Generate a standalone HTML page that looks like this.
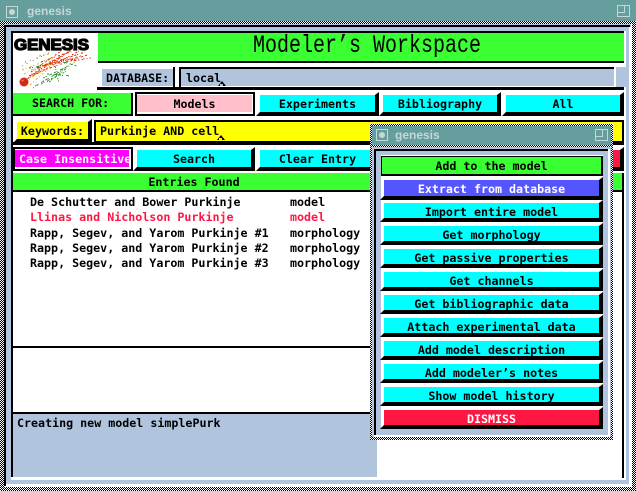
<!DOCTYPE html>
<html><head><meta charset="utf-8"><title>genesis</title>
<style>
html,body{margin:0;padding:0;background:#fff}
#p{position:relative;width:636px;height:491px;overflow:hidden;background:#fff;font:bold 11.67px/1 "DejaVu Sans Mono","Liberation Mono",monospace;color:#000}
#p div{position:absolute;box-sizing:border-box}
.ck{background:repeating-conic-gradient(#000 0 25%,#fff 0 50%) 0 0/2px 2px}
.lb{background:#b0c4de}.k{background:#000}.w{background:#fff}.t{background:#669e9e}
.btn{text-align:center;white-space:pre}
.btn::after{content:"";position:absolute;left:-4px;top:-3px;right:-4px;bottom:-4px;background:#000;clip-path:polygon(100% 0,100% 100%,0 100%,4px calc(100% - 4px),calc(100% - 4px) calc(100% - 4px),calc(100% - 4px) 3px)}
.btn::before{content:"";position:absolute;left:-2px;top:-2px;width:calc(100% + 2px);height:2px;background:#fff}
.c{background:#0ff}
.row{white-space:pre;line-height:15px;height:15px}
.gt{font:bold 12px/14px "Liberation Sans",sans-serif;color:#c4d8d8;white-space:pre}
</style></head><body>
<div id="p">
<div class="ck" style="left:0;top:0;width:636px;height:491px"></div>
<div class="t" style="left:0;top:0;width:636px;height:21px"></div>
<div style="left:6px;top:6px;width:12px;height:12px;border:1px solid #c4d8d8"></div>
<div style="left:9px;top:9px;width:6px;height:6px;border-radius:50%;background:#c4d8d8"></div>
<div class="gt" style="left:27px;top:4px">genesis</div>
<div style="left:617px;top:5px;width:13px;height:12px;border:1px solid #c4d8d8"></div>
<div style="left:617px;top:5px;width:8px;height:8px;border:1px solid #c4d8d8"></div>

<div class="lb" style="left:4px;top:24px;width:628px;height:463px"></div>
<div class="w" style="left:631px;top:24px;width:1px;height:463px"></div>
<div class="w" style="left:4px;top:486px;width:628px;height:1px"></div>
<div class="k" style="left:4px;top:25px;width:626px;height:2px"></div>
<div class="k" style="left:4px;top:25px;width:2px;height:461px"></div>
<div class="w" style="left:6px;top:484px;width:625px;height:2px"></div>
<div class="w" style="left:629px;top:27px;width:2px;height:459px"></div>
<div class="k" style="left:11px;top:31px;width:613px;height:447px"></div>
<div class="w" style="left:13px;top:33px;width:611px;height:447px"></div>
<div class="w" style="left:624px;top:31px;width:2px;height:36px"></div>
<div class="w" style="left:624px;top:87px;width:2px;height:393px"></div>
<div class="w" style="left:11px;top:477px;width:615px;height:3px"></div>

<!-- logo -->
<svg style="position:absolute;left:13px;top:32px" width="84" height="58" viewBox="0 0 84 58" shape-rendering="crispEdges">
<g fill="none" stroke-width="1">
<path stroke="#d8341a" stroke-dasharray="2 1 1 3 2 2" d="M14 47L66 19M16 44L60 17M20 42L74 23M24 36L68 24M28 30L56 20M18 40L48 19M30 34L72 20M36 30L62 27"/>
<path stroke="#e24a18" stroke-dasharray="1 2 3 2" d="M15 46L50 24M22 38L64 16M26 34L78 26"/>
<path stroke="#e0b41e" stroke-dasharray="2 2 1 3" d="M11 42L40 26M13 50L36 32M17 53L34 38M9 38L30 30M18 44L38 36M26 24L36 22"/>
<path stroke="#2f9a36" stroke-dasharray="2 1 1 3 3 2" d="M22 54L50 38M28 52L56 38M30 46L60 32M34 42L58 44M36 50L54 36M42 34L46 52M16 36L28 34M50 30L64 34"/>
<path stroke="#7a8f2c" stroke-dasharray="1 4 1 6" d="M9 34L50 14M20 56L68 26M34 50L62 28M12 30L30 24"/>
</g>
<text x="1" y="18" font-family="Liberation Sans" font-weight="bold" font-size="16" textLength="75" lengthAdjust="spacingAndGlyphs" stroke="#000" stroke-width="1.3" shape-rendering="auto">GENESIS</text>
<circle cx="11" cy="50" r="4.5" fill="#d42a14" shape-rendering="auto"/><circle cx="9.5" cy="48.5" r="1" fill="#f08060" shape-rendering="auto"/>
</svg>

<!-- title -->
<div class="k" style="left:98px;top:33px;width:526px;height:30px"></div>
<div style="left:98px;top:33px;width:526px;height:28px;background:#39ff33"></div>
<div style="left:110px;top:33px;width:514px;height:28px;text-align:center;font:normal 20px/28px 'Liberation Mono',monospace;transform:scaleY(1.25)">Modeler’s Workspace</div>

<!-- database -->
<div class="lb" style="left:616px;top:67px;width:13px;height:20px"></div>
<div class="k" style="left:97px;top:87px;width:527px;height:3px"></div>
<div class="k" style="left:173px;top:67px;width:2px;height:21px"></div>
<div class="lb" style="left:102px;top:69px;width:71px;height:17px;line-height:18px;padding-left:4px">DATABASE:</div>
<div class="k" style="left:179px;top:67px;width:437px;height:20px"></div>
<div class="lb" style="left:181px;top:69px;width:433px;height:17px;line-height:18px;padding-left:5px">local</div>
<div class="w" style="left:181px;top:86px;width:435px;height:1px"></div>
<div class="w" style="left:614px;top:67px;width:2px;height:20px"></div>
<div style="left:218px;top:81px;width:0;height:0;border-left:4px solid transparent;border-right:4px solid transparent;border-bottom:5px solid #000"></div>
<div class="lb" style="left:220px;top:84px;width:3px;height:2px"></div>

<!-- search row -->
<div class="k" style="left:13px;top:93px;width:120px;height:23px"></div>
<div style="left:13px;top:93px;width:118px;height:21px;background:#39ff33;line-height:20px;padding-left:19px">SEARCH FOR:</div>
<div class="k" style="left:135px;top:92px;width:120px;height:24px"></div>
<div class="w" style="left:137px;top:94px;width:116px;height:20px"></div>
<div style="left:137px;top:95px;width:115px;height:17px;background:#ffc0cb;line-height:18px;text-align:center">Models</div>
<div class="btn c" style="left:260px;top:95px;width:115px;height:17px;line-height:18px">Experiments</div>
<div class="btn c" style="left:383px;top:95px;width:114px;height:17px;line-height:18px">Bibliography</div>
<div class="btn c" style="left:506px;top:95px;width:114px;height:17px;line-height:18px">All</div>

<!-- keywords -->
<div class="btn" style="left:17px;top:122px;width:71px;height:17px;background:#ff0;line-height:18px">Keywords:</div>
<div class="k" style="left:94px;top:120px;width:530px;height:22px"></div>
<div style="left:96px;top:122px;width:526px;height:19px;background:#ff0;line-height:19px;padding-left:4px">Purkinje AND cell</div>
<div style="left:217px;top:135px;width:0;height:0;border-left:4px solid transparent;border-right:4px solid transparent;border-bottom:5px solid #000"></div>
<div style="left:219px;top:138px;width:3px;height:2px;background:#ff0"></div>
<div class="k" style="left:13px;top:142px;width:611px;height:3px"></div>

<!-- action row -->
<div class="k" style="left:13px;top:147px;width:120px;height:24px"></div>
<div class="w" style="left:15px;top:149px;width:116px;height:20px"></div>
<div style="left:15px;top:150px;width:114px;height:17px;background:#f0f;color:#fff;line-height:18px;padding-left:4px;white-space:pre;overflow:hidden">Case Insensitive</div>
<div class="btn c" style="left:137px;top:150px;width:114px;height:17px;line-height:18px">Search</div>
<div class="btn c" style="left:260px;top:150px;width:115px;height:17px;line-height:18px">Clear Entry</div>
<div class="btn" style="left:560px;top:150px;width:60px;height:17px;background:#ff1744"></div>

<!-- entries -->
<div style="left:13px;top:173px;width:611px;height:17px;background:#39ff33;line-height:18px;text-align:center;padding-right:249px">Entries Found</div>
<div class="k" style="left:13px;top:190px;width:611px;height:2px"></div>
<div class="k" style="left:622px;top:173px;width:2px;height:305px"></div>
<div class="row" style="left:30px;top:195px">De Schutter and Bower Purkinje</div><div class="row" style="left:290px;top:195px">model</div>
<div class="row" style="left:30px;top:210px;color:#ff1744">Llinas and Nicholson Purkinje</div><div class="row" style="left:290px;top:210px;color:#ff1744">model</div>
<div class="row" style="left:30px;top:226px">Rapp, Segev, and Yarom Purkinje #1</div><div class="row" style="left:290px;top:226px">morphology</div>
<div class="row" style="left:30px;top:241px">Rapp, Segev, and Yarom Purkinje #2</div><div class="row" style="left:290px;top:241px">morphology</div>
<div class="row" style="left:30px;top:256px">Rapp, Segev, and Yarom Purkinje #3</div><div class="row" style="left:290px;top:256px">morphology</div>
<div class="k" style="left:12px;top:346px;width:370px;height:2px"></div>

<!-- log -->
<div class="k" style="left:11px;top:412px;width:366px;height:2px"></div>
<div class="lb" style="left:13px;top:414px;width:364px;height:63px;line-height:19px;padding-left:4px">Creating new model simplePurk</div>

<!-- popup -->
<div class="ck" style="left:370px;top:124px;width:243px;height:316px"></div>
<div class="t" style="left:372px;top:126px;width:239px;height:19px"></div>
<div style="left:376px;top:129px;width:12px;height:12px;border:1px solid #c4d8d8"></div>
<div style="left:379px;top:132px;width:6px;height:6px;border-radius:50%;background:#c4d8d8"></div>
<div class="gt" style="left:395px;top:128px">genesis</div>
<div style="left:595px;top:129px;width:13px;height:12px;border:1px solid #c4d8d8"></div>
<div style="left:595px;top:129px;width:8px;height:8px;border:1px solid #c4d8d8"></div>
<div class="lb" style="left:372px;top:147px;width:239px;height:290px"></div>
<div class="k" style="left:374px;top:149px;width:235px;height:287px"></div>
<div class="lb" style="left:376px;top:151px;width:232px;height:284px"></div>
<div class="w" style="left:608px;top:149px;width:2px;height:287px"></div>
<div class="w" style="left:374px;top:435px;width:236px;height:2px"></div>
<div class="w" style="left:381px;top:155px;width:222px;height:274px"></div>

<div class="k" style="left:381px;top:156px;width:222px;height:20px"></div>
<div style="left:382px;top:157px;width:219px;height:17px;background:#39ff33;line-height:18px;text-align:center">Add to the model</div>
<div class="btn" style="left:384px;top:180px;width:215px;height:16px;line-height:18px;background:#5555ff;color:#fff">Extract from database</div>
<div class="btn c" style="left:384px;top:203px;width:215px;height:15px;line-height:18px">Import entire model</div>
<div class="btn c" style="left:384px;top:226px;width:215px;height:15px;line-height:18px">Get morphology</div>
<div class="btn c" style="left:384px;top:249px;width:215px;height:15px;line-height:18px">Get passive properties</div>
<div class="btn c" style="left:384px;top:272px;width:215px;height:15px;line-height:18px">Get channels</div>
<div class="btn c" style="left:384px;top:295px;width:215px;height:15px;line-height:18px">Get bibliographic data</div>
<div class="btn c" style="left:384px;top:318px;width:215px;height:15px;line-height:18px">Attach experimental data</div>
<div class="btn c" style="left:384px;top:341px;width:215px;height:15px;line-height:18px">Add model description</div>
<div class="btn c" style="left:384px;top:364px;width:215px;height:15px;line-height:18px">Add modeler’s notes</div>
<div class="btn c" style="left:384px;top:387px;width:215px;height:15px;line-height:18px">Show model history</div>
<div class="btn" style="left:384px;top:410px;width:215px;height:15px;line-height:18px;background:#ff1744;color:#fff">DISMISS</div>
</div>
</body></html>
